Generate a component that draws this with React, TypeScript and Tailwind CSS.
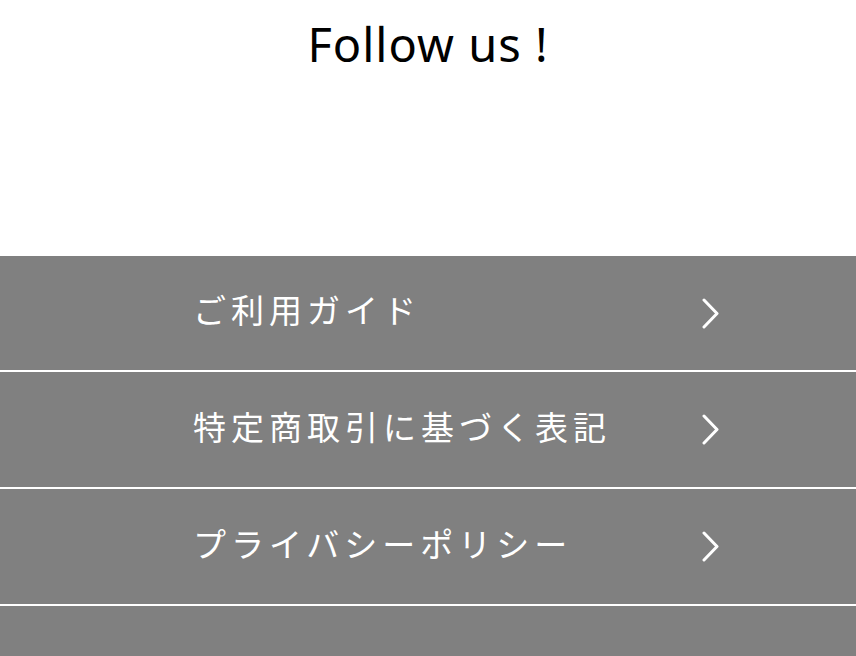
const LINKS = ['ご利用ガイド', '特定商取引に基づく表記', 'プライバシーポリシー', ''];

function Chevron() {
  return (
    <svg width="17" height="31" viewBox="0 0 17 31" fill="none" aria-hidden="true">
      <polyline points="2,2 15,15.5 2,29" stroke="white" strokeWidth="3" strokeLinecap="round" strokeLinejoin="round" />
    </svg>
  );
}

export default function App() {
  return (
    <div className="h-screen overflow-hidden bg-white">
      <section className="h-[256px] pt-[12px] text-center">
        <h2
          className="text-[47px] leading-[64px] tracking-[1px] text-black"
          style={{ fontFamily: '"Noto Sans", "Open Sans", sans-serif' }}
        >
          Follow us !
        </h2>
      </section>
      <nav className="bg-[#808080]">
        {LINKS.map((label, i) => (
          <a
            key={i}
            href="#"
            className={`flex items-center border-b-2 border-white ${i === 0 ? 'h-[116px]' : 'h-[117px]'}`}
          >
            {label && (
              <div className="ml-[193px] flex w-[530px] items-center justify-between pr-[4px]">
                <span
                  className="-mt-[6px] text-[33px] tracking-[5px] text-white"
                  style={{ fontFamily: '"Noto Sans CJK JP", "Noto Sans", sans-serif' }}
                >
                  {label}
                </span>
                <Chevron />
              </div>
            )}
          </a>
        ))}
      </nav>
    </div>
  );
}
